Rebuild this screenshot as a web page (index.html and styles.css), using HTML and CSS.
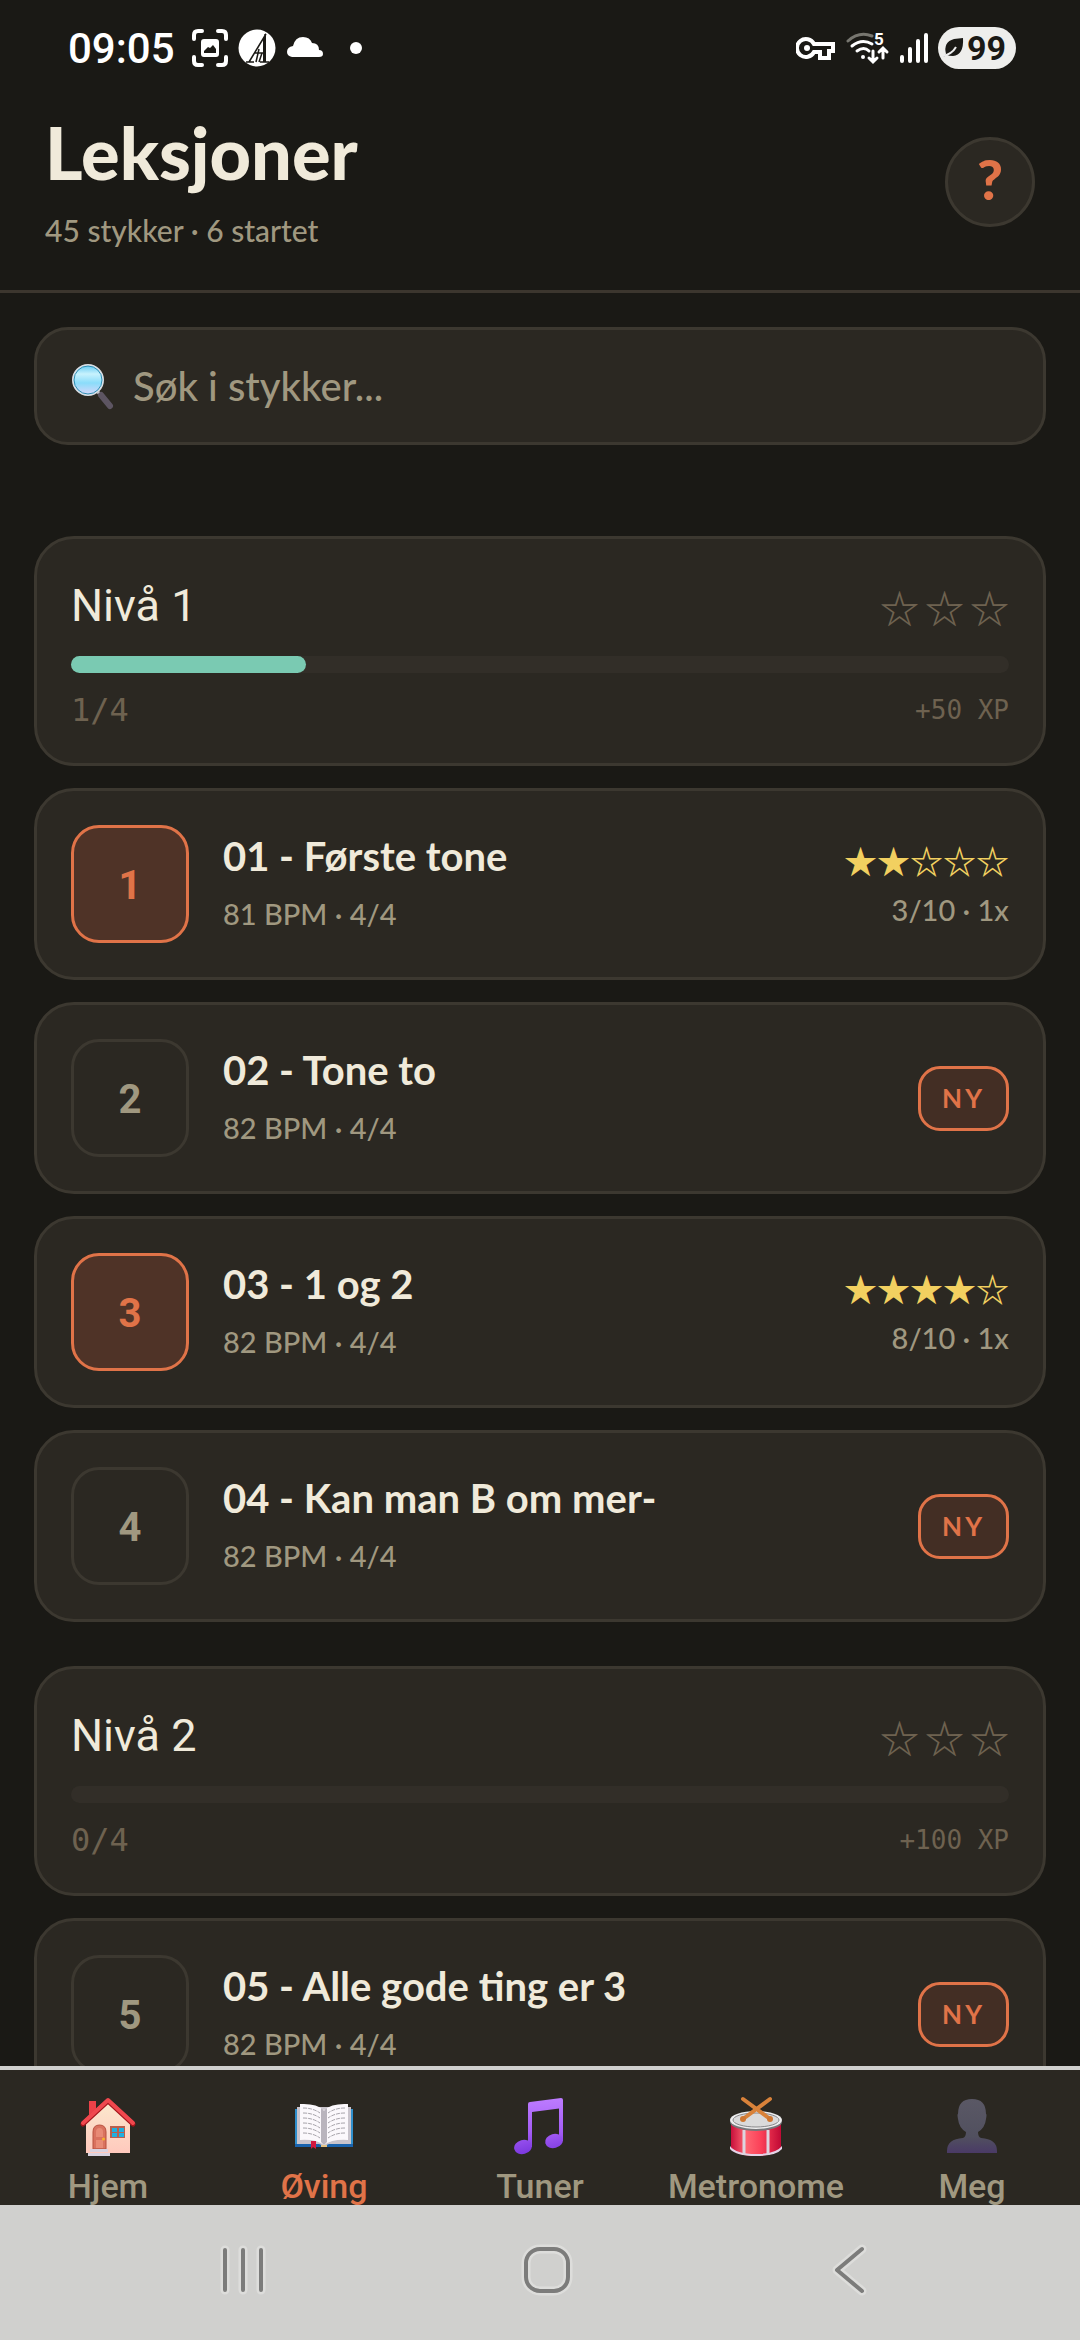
FILE: index.html
```html
<!DOCTYPE html>
<html lang="no">
<head>
  <meta charset="UTF-8">
  <meta name="viewport" content="width=device-width, initial-scale=1.0">
  <title>Leksjoner</title>
  <link rel="stylesheet" href="styles.css">
</head>
<body>
  <div class="statusbar">
    <div class="status-left">
      <span class="clock">09:05</span>
      <svg width="36" height="38" viewBox="0 0 36 38" fill="none" stroke="#fff" stroke-width="4" stroke-linecap="round">
        <path d="M2 10V6q0-4 4-4h4M26 2h4q4 0 4 4v4M34 28v4q0 4-4 4h-4M10 36H6q-4 0-4-4v-4"/>
        <path fill="#fff" stroke="none" fill-rule="evenodd" d="M12 10h12q3 0 3 3v12q0 3-3 3H12q-3 0-3-3V13q0-3 3-3zM12 24h12v-4l-3-4-3 3-2-1-4 4z"/>
      </svg>
      <svg width="38" height="38" viewBox="0 0 38 38">
        <circle cx="19" cy="19" r="18.500" fill="#fff"/>
        <path d="M28 5 11 33M27 5v27M8 33h8M22 33h9M16 24h10M21 20l-3 13M24 24l-3 9" stroke="#1a1915" stroke-width="1.500" fill="none"/>
        <path d="M25 10l3-6v29h-3z" fill="#1a1915"/>
      </svg>
      <svg width="38" height="24" viewBox="0 0 38 24" fill="#fff">
        <path d="M6 21q-5-1-5-5 0-5 6-6Q9 1 17 1q7 0 9 6 7 0 7 7 4 0 4 4 0 3-4 3z"/>
      </svg>
      <span class="more-dot"></span>
    </div>
    <div class="status-right">
      <svg width="40" height="26" viewBox="0 0 40 26" fill="none" stroke="#fff" stroke-width="4">
        <path d="M18 9h19v7h-4v7h-9v-6h-6a9 9 0 1 1 0-8z"/>
        <circle cx="11" cy="13" r="3" fill="#fff" stroke="none"/>
      </svg>
      <svg width="44" height="42" viewBox="0 -4 44 42" fill="none" stroke="#fff" stroke-width="3" stroke-linecap="round">
        <path d="M2 10Q13 0 26 5" stroke="#77766f"/>
        <path d="M6 15q10-8 20-2M11 20q7-5 12 0"/>
        <circle cx="17" cy="26" r="2" fill="#fff" stroke="none"/>
        <path d="M27 20v10M23 27l4 4 4-4M37 27V18M33 21l4-4 4 4"/>
        <text x="28" y="14" class="band">5</text>
      </svg>
      <svg width="28" height="32" viewBox="0 0 28 32" stroke="#fff" stroke-width="4" stroke-linecap="round">
        <path d="M2 25v4M10 17v12M18 9v20M26 3v26"/>
      </svg>
      <span class="battery">
        <svg width="22" height="20" viewBox="0 0 22 20"><path d="M4 16Q1 4 12 1l9-1q1 17-10 18-4 0-6-1l-4 2z" fill="#1a1915"/><path d="M1 18q9-2 13-9" stroke="#eee" stroke-width="2" fill="none"/></svg>
        99
      </span>
    </div>
  </div>

  <header class="header">
    <div>
      <h1>Leksjoner</h1>
      <p class="subtitle">45 stykker · 6 startet</p>
    </div>
    <button class="help-btn" type="button" aria-label="Hjelp">?</button>
  </header>

  <main class="content">
    <label class="search">
      <svg width="44" height="48" viewBox="0 0 44 48" aria-hidden="true">
        <defs>
          <linearGradient id="glass" x1="0" y1="0" x2="0" y2="1">
            <stop offset="0" stop-color="#5fc8f2"/><stop offset=".3" stop-color="#c8f2fd"/><stop offset=".6" stop-color="#8adcfa"/><stop offset="1" stop-color="#dcd6fa"/>
          </linearGradient>
        </defs>
        <path d="m27 30 4 5" stroke="#c9c9cf" stroke-width="3"/>
        <path d="m30 33 9 11" stroke="#5d5562" stroke-width="6" stroke-linecap="round"/>
        <circle cx="17" cy="18" r="15" fill="url(#glass)" stroke="#d8dfe6" stroke-width="2"/>
        <circle cx="17" cy="18" r="14" fill="none" stroke="#2f8fb4" stroke-width="1"/>
      </svg>
      <input type="text" placeholder="Søk i stykker..." aria-label="Søk i stykker">
    </label>

    <section class="level">
      <div class="card level-card">
        <div class="level-row">
          <h2>Nivå 1</h2>
          <div class="level-stars"><span>☆</span><span>☆</span><span>☆</span></div>
        </div>
        <div class="progress"><div class="progress-fill" style="width: 25%"></div></div>
        <div class="level-row level-meta"><span>1/4</span><span class="xp">+50 XP</span></div>
      </div>
      <button class="card lesson" type="button">
        <span class="number started">1</span>
        <span class="lesson-info"><span class="lesson-title">01 - Første tone</span><span class="lesson-sub">81 BPM · 4/4</span></span>
        <span class="score"><span class="stars">★★☆☆☆</span><span class="lesson-sub">3/10 · 1x</span></span>
      </button>
      <button class="card lesson" type="button">
        <span class="number">2</span>
        <span class="lesson-info"><span class="lesson-title">02 - Tone to</span><span class="lesson-sub">82 BPM · 4/4</span></span>
        <span class="badge">NY</span>
      </button>
      <button class="card lesson" type="button">
        <span class="number started">3</span>
        <span class="lesson-info"><span class="lesson-title">03 - 1 og 2</span><span class="lesson-sub">82 BPM · 4/4</span></span>
        <span class="score"><span class="stars">★★★★☆</span><span class="lesson-sub">8/10 · 1x</span></span>
      </button>
      <button class="card lesson" type="button">
        <span class="number">4</span>
        <span class="lesson-info"><span class="lesson-title">04 - Kan man B om mer-</span><span class="lesson-sub">82 BPM · 4/4</span></span>
        <span class="badge">NY</span>
      </button>
    </section>

    <section class="level">
      <div class="card level-card">
        <div class="level-row">
          <h2>Nivå 2</h2>
          <div class="level-stars"><span>☆</span><span>☆</span><span>☆</span></div>
        </div>
        <div class="progress"><div class="progress-fill" style="width: 0%"></div></div>
        <div class="level-row level-meta"><span>0/4</span><span class="xp">+100 XP</span></div>
      </div>
      <button class="card lesson" type="button">
        <span class="number">5</span>
        <span class="lesson-info"><span class="lesson-title">05 - Alle gode ting er 3</span><span class="lesson-sub">82 BPM · 4/4</span></span>
        <span class="badge">NY</span>
      </button>
    </section>
  </main>

  <nav class="tabs">
    <a href="#hjem">
      <svg width="60" height="60" viewBox="0 0 60 60" aria-hidden="true">
        <defs><linearGradient id="wall" x1="0" y1="0" x2="0" y2="1"><stop offset="0" stop-color="#fbe8cd"/><stop offset="1" stop-color="#ffc9bd"/></linearGradient></defs>
        <path d="M11 5h7v14h-7z" fill="#ea4148"/>
        <path d="M8 26 30 7l22 19v31H8z" fill="url(#wall)"/>
        <path d="m5 28 25-23 25 23" fill="none" stroke="#a5141b" stroke-width="5" stroke-linejoin="round" stroke-linecap="round"/>
        <path d="M5 27 30 4l25 23" fill="none" stroke="#f0484e" stroke-width="4" stroke-linejoin="round" stroke-linecap="round"/>
        <path d="M15 53V36q0-7 6.500-7t6.500 7v17z" fill="#d9725f" stroke="#b9513f"/>
        <path d="M18 41v-5q0-4 3.500-4t3.500 4v5zM18 44h7v8h-7z" fill="#e88a75"/>
        <circle cx="25.500" cy="43" r="1.500" fill="#f5b32b"/>
        <path d="M12 53h18v3H12zM10 57h22v3H10z" fill="#d9d3e0"/>
        <path d="M32 30h15v12H32z" fill="#b9604e"/>
        <path d="M34 32h5v4h-5zM41 32h5v4h-5zM34 37h5v4h-5zM41 37h5v4h-5z" fill="#1fb0e0"/>
      </svg>
      <span>Hjem</span>
    </a>
    <a href="#oving" class="active">
      <svg width="60" height="60" viewBox="0 0 60 60" aria-hidden="true">
        <path d="M1 13h58v38H1z" fill="#2f8ecb"/>
        <path d="M1 48h58v3H1z" fill="#1a63ad"/>
        <path d="M3 11h54v37H35l-5 2-5-2H3z" fill="#c9c4cc"/>
        <path d="M6 8q16-1 24 6 8-7 24-6v36q-16-1-24 5-8-6-24-5z" fill="#fbf8fc"/>
        <path d="M27 12q2 1 3 3 1-2 3-3v34l-3 3-3-3z" fill="#b9b4bd"/>
        <path d="M9 12q10 0 17 5M9 17q10 0 17 5M9 22q10 0 17 5M9 27q10 0 17 5M9 32q10 0 17 5M9 37q10 0 17 5M51 12q-10 0-17 5M51 17q-10 0-17 5M51 22q-10 0-17 5M51 27q-10 0-17 5M51 32q-10 0-17 5M51 37q-10 0-17 5" fill="none" stroke="#a6a3aa" stroke-dasharray="4 1"/>
        <path d="M17 45h5v8l-3-2-2 2z" fill="#d3173f"/>
        <path d="M27 49h6v2h-6z" fill="#e5c486"/>
      </svg>
      <span>Øving</span>
    </a>
    <a href="#tuner">
      <svg width="60" height="60" viewBox="0 0 60 60" aria-hidden="true">
        <defs><linearGradient id="note" gradientUnits="userSpaceOnUse" x1="0" y1="2" x2="0" y2="58"><stop offset="0" stop-color="#bd7cff"/><stop offset=".6" stop-color="#a45cf5"/><stop offset="1" stop-color="#7b38df"/></linearGradient></defs>
        <g fill="url(#note)">
          <path d="M18 8q0-2 2-2l31-4q2 0 2 2v8L22 16v35h-4z"/>
          <path d="M49 8h4v37h-4z"/>
          <ellipse cx="13" cy="51" rx="9" ry="7" transform="rotate(-15 13 51)"/>
          <ellipse cx="44" cy="45" rx="9" ry="7" transform="rotate(-15 44 45)"/>
        </g>
      </svg>
      <span>Tuner</span>
    </a>
    <a href="#metronome">
      <svg width="60" height="60" viewBox="0 0 60 60" aria-hidden="true">
        <defs><linearGradient id="drum"><stop offset="0" stop-color="#c8103c"/><stop offset=".3" stop-color="#ff6672"/><stop offset=".6" stop-color="#fb4058"/><stop offset="1" stop-color="#c00a35"/></linearGradient></defs>
        <path d="M5 26v26q6 8 25 8t25-8V26z" fill="url(#drum)"/>
        <path d="M4 50q6 8 26 8t26-8v3q-6 7-26 7T4 53z" fill="#e3d3e8"/>
        <path d="M18 34v25M42 34v25" stroke="#ddd5df" stroke-width="3"/>
        <ellipse cx="30" cy="26" rx="26" ry="9" fill="#77777b"/>
        <ellipse cx="30" cy="24" rx="26" ry="9" fill="#eeeeef"/>
        <ellipse cx="30" cy="24" rx="23" ry="7" fill="#dadadb" stroke="#88888b"/>
        <path d="M17 3 44 23M44 3 17 23" stroke="#d9823a" stroke-width="4" stroke-linecap="round"/>
        <circle cx="17" cy="23" r="3" fill="#cf7732"/><circle cx="44" cy="23" r="3" fill="#cf7732"/>
      </svg>
      <span>Metronome</span>
    </a>
    <a href="#meg">
      <svg width="60" height="60" viewBox="0 0 60 60" aria-hidden="true">
        <defs><linearGradient id="bust" x1="0" y1="0" x2="0" y2="1"><stop offset="0" stop-color="#5a5865"/><stop offset=".7" stop-color="#51505f"/><stop offset="1" stop-color="#4a3a66"/></linearGradient></defs>
        <path d="M30 3q14 0 14 15 1 0 0 5-1 9-8 13 0 5 3 6 16 1 16 13v2H5v-2q0-12 16-13 3-1 3-6-7-4-8-13-1-5 0-5Q16 3 30 3z" fill="url(#bust)"/>
      </svg>
      <span>Meg</span>
    </a>
  </nav>

  <div class="sysbar">
    <button type="button" aria-label="Siste apper">
      <svg width="52" height="52" viewBox="0 0 52 52"><path class="halo" d="M8 6v40M26 6v40M44 6v40"/><path d="M8 6v40M26 6v40M44 6v40"/></svg>
    </button>
    <button type="button" aria-label="Startskjerm">
      <svg width="52" height="52" viewBox="0 0 52 52"><rect class="halo" x="5" y="5" width="42" height="42" rx="14"/><rect x="5" y="5" width="42" height="42" rx="14"/></svg>
    </button>
    <button type="button" aria-label="Tilbake">
      <svg width="52" height="52" viewBox="0 0 52 52"><path class="halo" d="M38 5 13 26l25 21"/><path d="M38 5 13 26l25 21"/></svg>
    </button>
  </div>
</body>
</html>
```
FILE: styles.css
```css
* {
  box-sizing: border-box;
}
body {
  margin: 0;
  height: 100vh;
  display: flex;
  flex-direction: column;
  background-color: #1a1915;
  color: #f0eada;
  font-family: Lato, sans-serif;
}
h1, h2, p {
  margin: 0;
}
button, input {
  font-family: inherit;
  color: inherit;
}

/* Status bar */
.statusbar {
  display: flex;
  justify-content: space-between;
  align-items: center;
  height: 96px;
  padding: 0 64px 0 68px;
  font-family: Roboto, sans-serif;
  color: #fff;
}
.status-left, .status-right {
  display: flex;
  align-items: center;
  gap: 10px;
}
.clock {
  font-size: 42px;
  font-weight: 500;
  margin-right: 7px;
}
.more-dot {
  width: 12px;
  height: 12px;
  margin-left: 16px;
  border-radius: 50%;
  background-color: #fff;
}
.band {
  font-size: 17px;
  font-weight: 700;
  fill: #fff;
  stroke: none;
}
.battery {
  display: flex;
  align-items: center;
  gap: 3px;
  height: 42px;
  padding: 0 10px 0 4px;
  border-radius: 21px;
  background-color: #eeeeec;
  color: #1a1915;
  font-size: 34px;
  font-weight: 700;
}

/* Header */
.header {
  display: flex;
  justify-content: space-between;
  align-items: center;
  padding: 16px 45px 38px;
  border-bottom: 3px solid #3c362e;
}
.header h1 {
  font-size: 72px;
  font-weight: 900;
  line-height: 80px;
}
.subtitle {
  margin-top: 16px;
  font-size: 30px;
  font-weight: 500;
  line-height: 44px;
  color: #a09880;
}
.help-btn {
  width: 90px;
  height: 90px;
  padding: 0 0 8px;
  border: 3px solid #3c3830;
  border-radius: 50%;
  background-color: #2b2822;
  color: #e07348;
  font-size: 56px;
  font-weight: 900;
}

/* Lesson list */
.content {
  flex: 1;
  min-height: 0;
  overflow: hidden;
  padding: 34px 34px 0;
}
.search {
  display: flex;
  align-items: center;
  gap: 16px;
  height: 118px;
  margin-bottom: 91px;
  padding: 0 34px;
  border: 3px solid #3c3830;
  border-radius: 34px;
  background-color: #2b2822;
}
.search input {
  flex: 1;
  min-width: 0;
  border: none;
  outline: none;
  background: none;
  font-size: 40px;
  font-weight: 500;
}
.search input::placeholder {
  color: #a09880;
  opacity: 1;
}
.level {
  display: flex;
  flex-direction: column;
  gap: 22px;
  margin-bottom: 44px;
}
.card {
  padding: 34px;
  border: 3px solid #3c3830;
  border-radius: 40px;
  background-color: #2b2822;
}
.level-card {
  height: 230px;
}
.level-row {
  display: flex;
  justify-content: space-between;
  align-items: center;
}
.level-row h2 {
  font-family: Roboto, sans-serif;
  font-size: 45px;
  font-weight: 400;
  line-height: 66px;
}
.level-stars {
  display: flex;
  gap: 6px;
  font-family: "Noto Sans CJK JP", sans-serif;
  font-size: 39px;
  font-weight: 700;
  line-height: 66px;
  color: #6e6250;
}
.progress {
  height: 17px;
  margin: 17px 0 16px;
  border-radius: 9px;
  background-color: #322e28;
}
.progress-fill {
  height: 100%;
  border-radius: 9px;
  background-color: #7acab2;
}
.level-meta {
  font-family: "DejaVu Sans Mono", monospace;
  font-size: 32px;
  line-height: 42px;
  color: #6e6250;
}
.xp {
  font-size: 26px;
}
.lesson {
  display: flex;
  align-items: center;
  gap: 34px;
  text-align: left;
}
.number {
  display: flex;
  align-items: center;
  justify-content: center;
  width: 118px;
  height: 118px;
  padding-top: 3px;
  border: 3px solid #3c3830;
  border-radius: 28px;
  font-family: Roboto, sans-serif;
  font-size: 40px;
  font-weight: 700;
  color: #a09880;
}
.number.started {
  border-color: #e07348;
  background-color: #4f3327;
  color: #e07348;
}
.lesson-info {
  display: flex;
  flex: 1;
  flex-direction: column;
  gap: 12px;
}
.lesson-title {
  font-size: 40px;
  font-weight: 700;
  line-height: 48px;
}
.lesson-sub {
  font-size: 29px;
  font-weight: 500;
  line-height: 44px;
  color: #a09880;
}
.score {
  display: flex;
  flex-direction: column;
  align-items: flex-end;
  gap: 4px;
}
.stars {
  font-family: "Noto Sans CJK JP", sans-serif;
  font-size: 33px;
  font-weight: 700;
  line-height: 48px;
  color: #f2d060;
}
.badge {
  padding: 14px 21px;
  border: 3px solid #e07348;
  border-radius: 22px;
  background-color: #432e24;
  color: #e07348;
  font-size: 26px;
  font-weight: 700;
  line-height: 31px;
  letter-spacing: 3px;
}

/* Bottom tabs */
.tabs {
  display: grid;
  grid-template-columns: repeat(5, 1fr);
  height: 139px;
  overflow: hidden;
  border-top: 4px solid #d0d0ce;
  background-color: #2b2822;
}
.tabs a {
  display: flex;
  flex-direction: column;
  align-items: center;
  gap: 10px;
  padding-top: 26px;
  font-family: Roboto, sans-serif;
  font-size: 34px;
  font-weight: 500;
  line-height: 40px;
  color: #a09880;
  text-decoration: none;
}
.tabs a.active {
  color: #e07348;
}
.tabs svg {
  flex: none;
}

/* System navigation */
.sysbar {
  display: flex;
  justify-content: space-between;
  align-items: center;
  height: 135px;
  padding: 0 204px 6px 217px;
  background-color: #d0d0ce;
}
.sysbar button {
  padding: 0;
  border: none;
  background: none;
}
.sysbar svg {
  display: block;
  fill: none;
  stroke: #7c7c7b;
  stroke-width: 4;
  stroke-linecap: round;
  stroke-linejoin: round;
}
.sysbar .halo {
  stroke: #dddddb;
  stroke-width: 9;
}
```
